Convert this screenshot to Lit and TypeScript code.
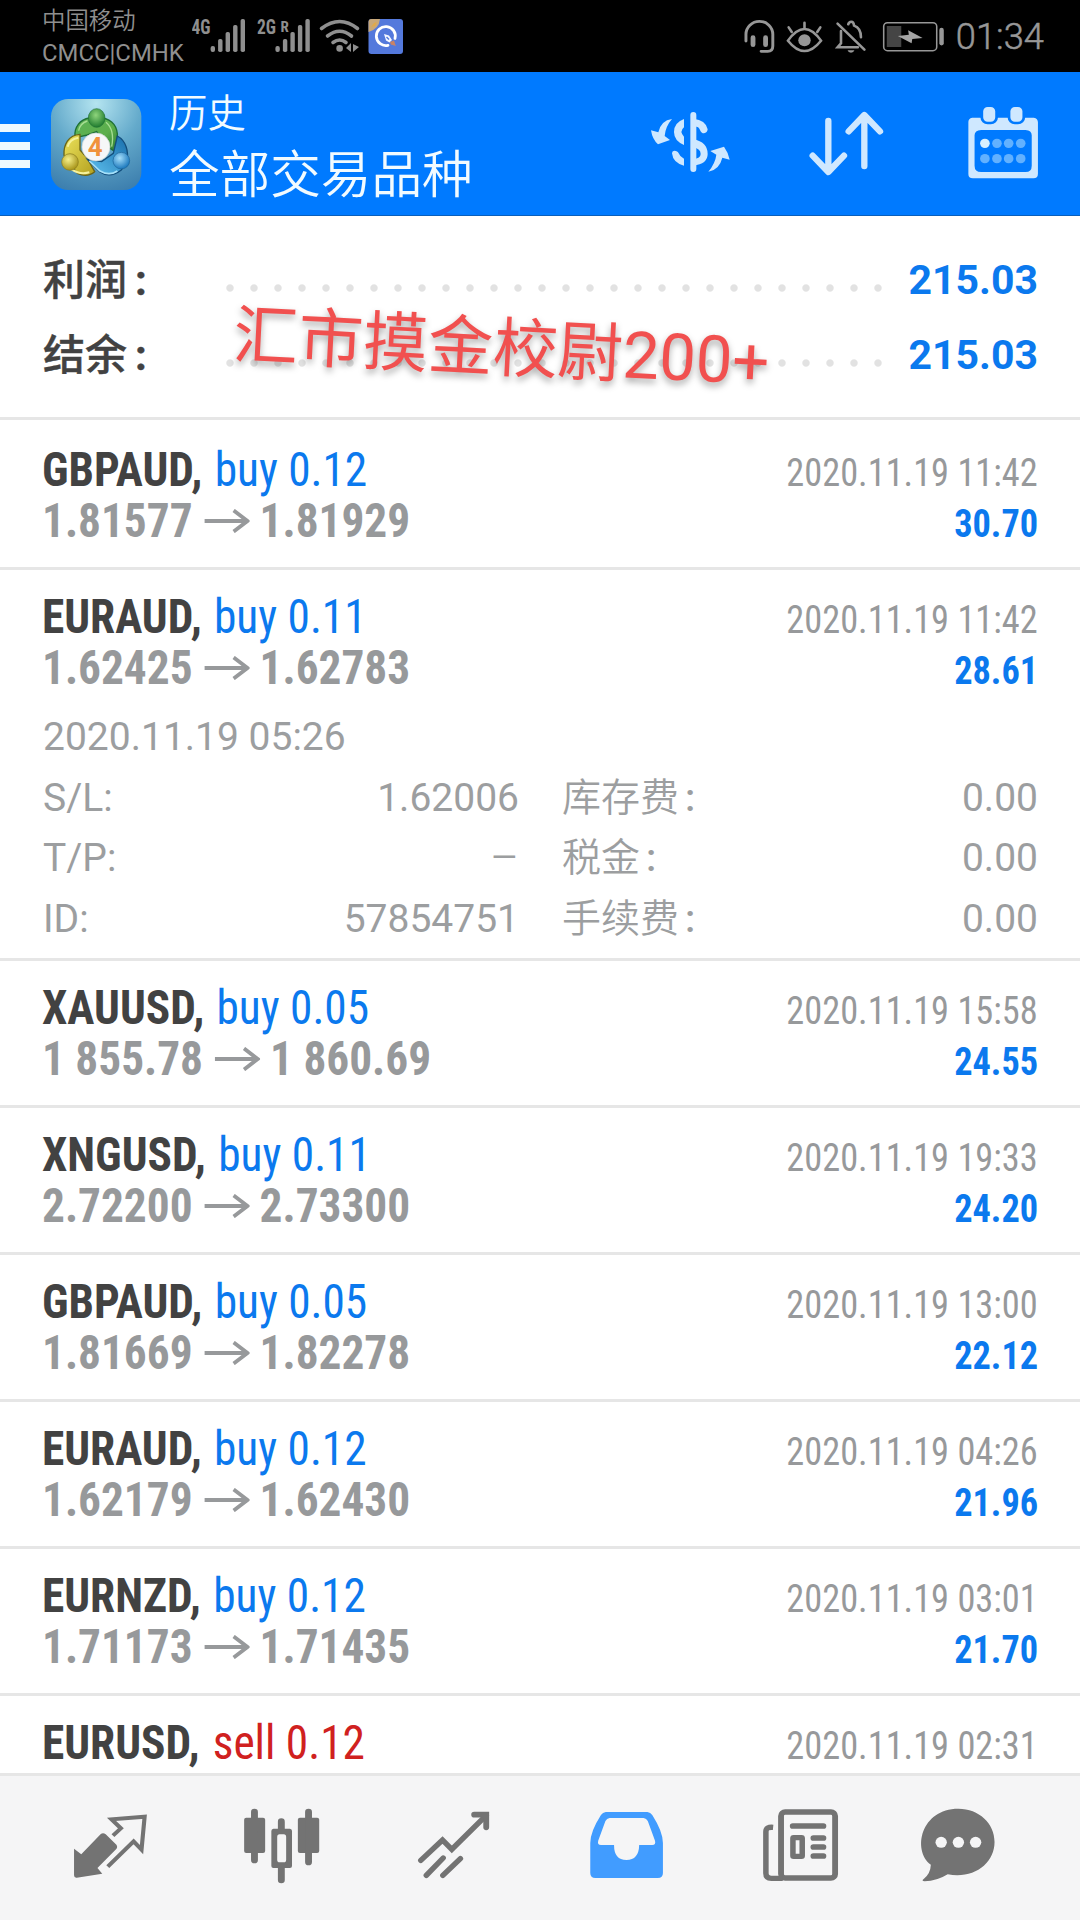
import { LitElement, html, svg, css, TemplateResult } from "lit";
import { customElement, property } from "lit/decorators.js";

interface Deal {
  symbol: string;
  side: "buy" | "sell";
  volume: string;
  open?: string;
  close?: string;
  time: string;
  profit?: string;
  details?: { openTime: string; rows: string[][] };
}

const DEALS: Deal[] = [
  { symbol: "GBPAUD", side: "buy", volume: "0.12", open: "1.81577", close: "1.81929", time: "2020.11.19 11:42", profit: "30.70" },
  {
    symbol: "EURAUD", side: "buy", volume: "0.11", open: "1.62425", close: "1.62783", time: "2020.11.19 11:42", profit: "28.61",
    details: {
      openTime: "2020.11.19 05:26",
      rows: [
        ["S/L:", "1.62006", "库存费", "0.00"],
        ["T/P:", "—", "税金", "0.00"],
        ["ID:", "57854751", "手续费", "0.00"],
      ],
    },
  },
  { symbol: "XAUUSD", side: "buy", volume: "0.05", open: "1 855.78", close: "1 860.69", time: "2020.11.19 15:58", profit: "24.55" },
  { symbol: "XNGUSD", side: "buy", volume: "0.11", open: "2.72200", close: "2.73300", time: "2020.11.19 19:33", profit: "24.20" },
  { symbol: "GBPAUD", side: "buy", volume: "0.05", open: "1.81669", close: "1.82278", time: "2020.11.19 13:00", profit: "22.12" },
  { symbol: "EURAUD", side: "buy", volume: "0.12", open: "1.62179", close: "1.62430", time: "2020.11.19 04:26", profit: "21.96" },
  { symbol: "EURNZD", side: "buy", volume: "0.12", open: "1.71173", close: "1.71435", time: "2020.11.19 03:01", profit: "21.70" },
  { symbol: "EURUSD", side: "sell", volume: "0.12", time: "2020.11.19 02:31" },
];

const icon = (x: number, y: number, w: number, h: number, body: TemplateResult) =>
  html`<svg width=${w} height=${h} viewBox="${x} ${y} ${w} ${h}">${body}</svg>`;

@customElement("status-bar")
class StatusBar extends LitElement {
  static styles = css`
    :host { display: flex; height: 72px; background: #000; color: #8f8f8f; font-family: Roboto, "Noto Sans CJK SC", sans-serif; }
    svg { display: block; flex: none; }
    .carrier { width: 150px; padding: 8px 0 0 42px; font-size: 23.4px; white-space: nowrap; }
    .carrier .cn { height: 29px; line-height: 27px; font-weight: 350; }
    .carrier .en { font-size: 23.9px; font-weight: 400; height: 30px; line-height: 32px; }
    .net { font-family: "Roboto Condensed", Roboto, sans-serif; font-weight: 700; fill: #8f8f8f; }
    .clock { margin-left: 12px; font-size: 36.3px; line-height: 74px; color: #979797; font-weight: 300; -webkit-text-stroke: 0.5px #979797; }
    .gap { flex: 1; }
    .right { display: flex; padding-right: 36px; }
  `;
  bars(x: number) {
    return svg`<g fill="#8f8f8f">
      <rect x=${x} y="46" width="4.4" height="6" rx="2"/><rect x=${x + 7.5} y="39" width="4.4" height="13" rx="1.8"/>
      <rect x=${x + 15} y="32" width="4.4" height="20" rx="1.8"/><rect x=${x + 22.5} y="25" width="4.4" height="27" rx="1.8"/>
      <rect x=${x + 30} y="19" width="4.4" height="33" rx="1.8"/></g>`;
  }
  render() {
    return html`
      <div class="carrier"><div class="cn">中国移动</div><div class="en">CMCC|CMHK</div></div>
      ${icon(192, 0, 60, 72, svg`<text class="net" x="191.5" y="34" font-size="20" textLength="19" lengthAdjust="spacingAndGlyphs">4G</text>${this.bars(210.6)}`)}
      ${icon(252, 0, 64, 72, svg`<text class="net" x="257" y="34" font-size="20" textLength="19" lengthAdjust="spacingAndGlyphs">2G</text>
        <text class="net" x="280.5" y="31.5" font-size="15">R</text>${this.bars(275.4)}`)}
      ${icon(316, 0, 46, 72, svg`<g fill="none" stroke="#8f8f8f" stroke-width="3.6" stroke-linecap="round">
        <path d="M321.5 28.5Q339.7 14.5 357.5 28.5M327.5 36Q339.7 26.5 351.5 36M333 42.5Q339.7 37.5 346 42.5"/></g>
        <circle cx="339.6" cy="48.4" r="3.3" fill="#8f8f8f"/>
        <path d="M351 43v9l-5-4zM353 44l6 3-6 5z" fill="#8f8f8f"/>`)}
      ${icon(362, 0, 46, 72, svg`<rect x="368.5" y="19" width="34.5" height="35" rx="3" fill="#5479dc"/>
        <path d="M368.5 32V22a3 3 0 0 1 3-3H380Q379 29 368.5 32z" fill="#c9a878"/><path d="M371 27l3-4 3-1-2 4z" fill="#e2a947"/>
        <path d="M388 45.300A9.500 9.500 0 1 1 395 38.500" fill="none" stroke="#fff" stroke-width="2.800" stroke-linecap="round"/>
        <path d="M384 34l5 1.500 3 4.500-2.500 2.500-3.500-2z" fill="#f6f8ff"/><path d="M386.500 37l2.500 2.500" stroke="#5479dc" stroke-width="1.400"/>
        <path d="M390 42l4-1.500 1.800 5.500-5-1.600z" fill="#c98365"/>`)}
      <div class="gap"></div>
      <div class="right">
        ${icon(742, 0, 203, 72, svg`<g transform="translate(540 0) scale(.34435 .33333)" stroke="#979797" fill="none" stroke-width="8.5" stroke-linecap="round">
          <path d="M601 123V103A39 39 0 0 1 679 103V138Q679 154 664 154H645"/>
          <path d="M621.5 113v21M658 113v21" stroke-width="14"/>
          <path d="M723 122Q771 52 819 122Q771 184 723 122zM771 68v17M725 82l9 14M817 82l-9 14" stroke-width="7.5"/>
          <circle cx="771" cy="121" r="18" fill="#979797" stroke="none"/>
          <path d="M867 71L945 149M877 93V130L867 142H926M898 73Q900 65 907 65Q914 65 915 77Q935 84 935 112" stroke-width="7.5"/>
          <path d="M896 151h20q-2 7-10 7t-10-7z" fill="#979797" stroke="none"/>
          <rect x="1001" y="68" width="154" height="84" rx="11" stroke-width="4.5"/>
          <rect x="1010" y="78" width="42" height="63" fill="#454545" stroke="none"/>
          <path d="M1169 90v40" stroke-width="13"/>
          <path d="M1042 108L1074 104 1072 91 1114 114 1084 117 1082 130z" fill="#a5a5a5" stroke="none"/>
        </g>`)}
        <div class="clock">01:34</div>
      </div>`;
  }
}

@customElement("app-header")
class AppHeader extends LitElement {
  static styles = css`
    :host { display: flex; height: 144px; box-sizing: border-box; background: #007aff; border-bottom: 1px solid #0a5fbb; color: #f2fbff; font-family: Roboto, "Noto Sans CJK SC", sans-serif; }
    svg { display: block; flex: none; }
    .titles { flex: 1; padding: 18px 0 0 19px; white-space: nowrap; }
    .sub { font-size: 38.4px; line-height: 48px; font-weight: 350; }
    .main { margin-top: 4px; font-size: 50.6px; line-height: 68px; font-weight: 350; }
    .four { font: 700 78px Roboto, sans-serif; fill: #f0923c; }
  `;
  render() {
    return html`
      ${icon(0, 72, 150, 143, svg`
        <defs>
          <radialGradient id="bg" cx=".5" cy=".05" r="1"><stop offset="0" stop-color="#b4e4f0"/><stop offset=".5" stop-color="#64aacb"/><stop offset="1" stop-color="#3d7fae"/></radialGradient>
          <linearGradient id="gr" x1="0" y1="0" x2="1" y2="1"><stop offset="0" stop-color="#5cb457"/><stop offset=".6" stop-color="#5cae4c"/><stop offset="1" stop-color="#2c7a34"/></linearGradient>
          <linearGradient id="ye" x1="0" y1="0" x2="1" y2="1"><stop offset="0" stop-color="#ece35c"/><stop offset="1" stop-color="#b3a01f"/></linearGradient>
          <linearGradient id="bl" x1="0" y1="1" x2="1" y2="0"><stop offset="0" stop-color="#61c3f0"/><stop offset="1" stop-color="#176dab"/></linearGradient>
          <radialGradient id="gb" cx=".45" cy=".35" r=".65"><stop offset="0" stop-color="#8fd57c"/><stop offset="1" stop-color="#1f7b2e"/></radialGradient>
          <radialGradient id="yb" cx=".4" cy=".35" r=".65"><stop offset="0" stop-color="#f6f08a"/><stop offset="1" stop-color="#a8951a"/></radialGradient>
          <radialGradient id="bb" cx=".4" cy=".35" r=".65"><stop offset="0" stop-color="#a5defa"/><stop offset="1" stop-color="#1b78bd"/></radialGradient>
        </defs>
        <g transform="translate(0 90) scale(.33333)">
          <path d="M0 102H90V126H0zM0 156H90V180H0zM0 210H90V234H0z" fill="#eef9ff"/>
          <rect x="153" y="27" width="271" height="273" rx="52" fill="url(#bg)"/>
          <path d="M225 140C222 112 240 88 268 84H306C338 88 354 112 352 142L345 185L315 165L290 125L262 135L240 140z" fill="url(#gr)" stroke="#1f6f35" stroke-width="4"/>
          <path d="M240 133C205 135 190 165 192 196L232 250Q262 264 284 245L262 205L240 180z" fill="url(#ye)" stroke="#6b6519" stroke-width="4"/>
          <path d="M352 138C378 152 387 185 380 212L364 240Q330 266 300 246L262 208L305 215L340 190z" fill="url(#bl)" stroke="#134e7c" stroke-width="4"/>
          <path d="M268 213L300 243Q328 259 352 243" fill="none" stroke="#a6e1fa" stroke-width="5"/>
          <path d="M203 170Q208 148 235 143M215 238Q240 255 268 247" fill="none" stroke="#f6f29c" stroke-width="6"/>
          <path d="M236 122Q240 100 262 93M335 170Q345 120 318 97" fill="none" stroke="#a5dd92" stroke-width="4"/>
          <ellipse cx="290" cy="84" rx="25" ry="28" fill="url(#gb)" stroke="#1f6f35" stroke-width="2"/>
          <circle cx="210" cy="216" r="25" fill="url(#yb)" stroke="#8a7c1c" stroke-width="2"/>
          <circle cx="364" cy="212" r="25" fill="url(#bb)" stroke="#1c6499" stroke-width="2"/>
          <circle cx="288" cy="171" r="42" fill="#f6f7f8" stroke="#ccd6d4" stroke-width="2"/>
          <text class="four" x="286" y="198" text-anchor="middle">4</text>
        </g>`)}
      <div class="titles"><div class="sub">历史</div><div class="main">全部交易品种</div></div>
      ${icon(640, 72, 440, 143, svg`
        <g transform="translate(640 90) scale(.33333)" fill="#cfe8ff">
          <path d="M160 75V237" stroke="#cfe8ff" stroke-width="18" stroke-linecap="round"/>
          <path d="M132 87V112Q117 124 132 140V165Q102 152 102 126Q102 98 132 87z"/>
          <path d="M96 190Q96 183 103 182Q113 182 116 190Q120 201 132 206V227Q99 219 96 190z"/>
          <path d="M160 86Q198 90 203 118Q202 129 192 130Q184 130 180 120Q176 108 160 110zM160 148Q203 156 203 192Q203 222 160 227V207Q182 205 182 192Q182 177 160 172z"/>
          <path d="M96 87Q63 91 55 127L33 121Q37 148 54 163L90 150L74 138Q76 110 96 87z"/>
          <path d="M205 245Q238 240 247 203L269 209Q264 186 252 170L211 183L229 194Q226 220 205 245z"/>
          <path d="M565 93V244M518 197L565 246 612 197M673 228V76M626 124L673 75 720 124" fill="none" stroke="#cfe8ff" stroke-width="19" stroke-linecap="round" stroke-linejoin="round"/>
        </g>
        <g transform="translate(540 0) scale(.34435 .33333)">
          <path fill-rule="evenodd" fill="#cfe8ff" d="M1255 353H1434Q1446 355 1446 367V521Q1446 535 1433 535H1257Q1244 535 1244 522V366Q1244 355 1255 353zM1281 390Q1262 391 1262 406V497Q1262 516 1281 516H1410Q1428 516 1428 497V406Q1428 391 1410 390z"/>
          <g fill="#cfe8ff" stroke="#007aff" stroke-width="8"><rect x="1283" y="317" width="43" height="52" rx="17"/><rect x="1362" y="317" width="43" height="52" rx="17"/></g>
          <circle cx="1292" cy="430" r="14" fill="#d6efff"/>
          <g fill="#62b1ff"><circle cx="1327" cy="430" r="14"/><circle cx="1361" cy="430" r="14"/><circle cx="1396" cy="430" r="14"/>
          <circle cx="1292" cy="476" r="14"/><circle cx="1327" cy="476" r="14"/><circle cx="1361" cy="476" r="14"/><circle cx="1396" cy="476" r="14"/></g>
        </g>`)}`;
  }
}

@customElement("account-summary")
class AccountSummary extends LitElement {
  static styles = css`
    :host { display: block; position: relative; box-sizing: border-box; height: 204px; padding: 27px 42px 0 43px; border-bottom: 3px solid #e6e6e6; font-family: Roboto, "Noto Sans CJK SC", sans-serif; }
    .line { display: flex; height: 75px; line-height: 75px; font-size: 42px; font-weight: 700; white-space: nowrap; }
    .label { width: 175.4px; color: #424242; font-weight: 500; -webkit-text-stroke: 0.4px #424242; }
    .colon { margin-left: 8px; font-weight: 700; }
    .dots { width: 672px; height: 8px; margin-top: 40.5px; background: radial-gradient(circle at 12px 4px, #e2e2e2 3.2px, transparent 4.2px) 0 0 / 24px 8px repeat-x; }
    .value { flex: 1; text-align: right; color: #0b79ee; font-size: 41px; line-height: 74px; }
    .mark { position: absolute; left: 233px; top: 85px; font-size: 65px; line-height: 96px; color: #f1504f; white-space: nowrap; transform: rotate(2.9deg); text-shadow: 0 4px 7px rgba(0, 0, 0, 0.35); }
  `;
  render() {
    return html`
      ${[["利润", "215.03"], ["结余", "215.03"]].map(([label, value]) => html`
        <div class="line"><div class="label">${label}<span class="colon">:</span></div><div class="dots"></div><div class="value">${value}</div></div>`)}
      <div class="mark">汇市摸金校尉200+</div>`;
  }
}

@customElement("deal-row")
class DealRow extends LitElement {
  @property({ attribute: false }) deal!: Deal;
  static styles = css`
    :host { display: block; box-sizing: border-box; height: 147px; padding: 21px 42px 0 41.5px; border-bottom: 3px solid #e6e6e6; font-family: "Roboto Condensed", Roboto, "Noto Sans CJK SC", sans-serif; }
    :host(.first) { height: 150px; padding-top: 24px; }
    :host(.open) { height: 391px; }
    .line { display: flex; justify-content: space-between; align-items: baseline; height: 51px; line-height: 51px; white-space: nowrap; }
    .left { font-size: 48px; transform: scaleX(0.944); transform-origin: 0 0; }
    .right { font-size: 39px; line-height: 40px; transform: scaleX(0.932); transform-origin: 100% 0; }
    .symbol { font-weight: 700; color: #424242; }
    .buy, .sell { margin-left: 2px; }
    .buy { color: #0b79ee; }
    .sell { color: #d0211f; margin-left: 3px; }
    .price { font-weight: 700; color: #97999b; }
    .time { color: #97999b; }
    .profit { font-weight: 700; color: #0b79ee; }
    .arrow { margin: 0 11px 0 12px; vertical-align: 4px; }
    .details { margin: 14px 0 0 1.5px; font: 400 39px/60.6px Roboto, "Noto Sans CJK SC", sans-serif; color: #9c9ea0; }
    .grid { display: grid; grid-template-columns: 200px 276px 276px 1fr; white-space: nowrap; }
    .grid :nth-child(even) { text-align: right; }
    .grid :nth-child(4n + 3) { padding-left: 43px; font-weight: 350; }
    .grid .dash { font-size: 33px; padding-right: 2px; }
    .colon { margin-left: 6px; font-weight: 500; }
  `;
  render() {
    const d = this.deal;
    return html`
      <div class="line">
        <div class="left"><span class="symbol">${d.symbol},</span> <span class=${d.side}>${d.side} ${d.volume}</span></div>
        <div class="right time">${d.time}</div>
      </div>
      ${d.open ? html`<div class="line">
        <div class="left price">${d.open}<svg class="arrow" width="48" height="24" viewBox="0 0 48 24"><path d="M0 12H45M31 1.5L45.5 12L31 22.5" fill="none" stroke="#97999b" stroke-width="4"/></svg>${d.close}</div>
        <div class="right profit">${d.profit}</div>
      </div>` : null}
      ${d.details ? html`<div class="details">
        <div>${d.details.openTime}</div>
        <div class="grid">${d.details.rows.map(([a, b, c, e]) => html`
          <div>${a}</div><div class=${b === "—" ? "dash" : ""}>${b}</div><div>${c}<span class="colon">:</span></div><div>${e}</div>`)}</div>
      </div>` : null}`;
  }
}

@customElement("tab-bar")
class TabBar extends LitElement {
  static styles = css`
    :host { display: flex; box-sizing: border-box; height: 147px; padding-left: 24px; background: #f5f5f6; border-top: 3px solid #e6e6e6; }
    svg { display: block; flex: none; }
  `;
  render() {
    const left = "translate(0 1740) scale(.34435 .33333)";
    const right = "translate(540 1740) scale(.34435 .33333)";
    const g = "#737373";
    return html`
      ${icon(24, 1776, 172, 144, svg`<g transform=${left}>
        <path d="M215 326L236 343L292 283Q299 276 307 283L338 314Q343 321 337 328L283 384L297 401L223 413Q215 414 215 406z" fill=${g}/>
        <path d="M328 287L351 265L324 238L420 230L411 329L388 304L313 380" fill="none" stroke=${g} stroke-width="12"/></g>`)}
      ${icon(196, 1776, 172, 144, svg`<g transform=${left} fill=${g}>
        <rect x="709" y="233" width="61" height="106" rx="6"/><rect x="865" y="233" width="62" height="106" rx="6"/>
        <path d="M739 216V360M896 216V366M817 245V270M817 380V420" stroke=${g} stroke-width="20" stroke-linecap="round"/>
        <path fill-rule="evenodd" d="M794 266H842Q848 267 848 273V378Q848 384 842 384H794Q788 384 788 378V273Q788 267 794 266zM812 283Q805 283 805 291V359Q805 367 812 367H824Q831 367 831 359V291Q831 283 824 283z"/></g>`)}
      ${icon(368, 1776, 172, 144, svg`<g transform=${left} fill="none" stroke=${g} stroke-width="16" stroke-linecap="round">
        <path d="M1222 361L1285 300L1312 328L1412 226M1238 406L1287 354M1286 406L1337 356"/>
        <path d="M1377 224H1412V262" stroke-width="17" stroke-linejoin="miter"/></g>`)}
      ${icon(540, 1776, 172, 144, svg`<g transform=${right}>
        <path fill-rule="evenodd" fill="#419cff" d="M191 216H312Q321 217 326 225Q357 275 357 309V399Q357 414 342 414H161Q146 414 146 399V309Q146 275 177 225Q182 217 191 216zM202 234Q194 235 190 243L169 302Q166 315 177 315H215Q215 360 251 360Q287 360 288 315H326Q337 315 334 302L313 243Q309 235 301 234z"/></g>`)}
      ${icon(712, 1776, 172, 144, svg`<g transform=${right} fill="none" stroke=${g}>
        <rect x="700" y="216" width="157" height="198" rx="12" stroke-width="17"/>
        <path d="M677 262Q656 260 656 275V400Q656 415 672 415H705" stroke-width="16"/>
        <path d="M734 258H823M794 294H823M794 321H823M794 348H823" stroke-width="17" stroke-linecap="round"/>
        <rect x="734.5" y="293" width="27" height="56" rx="2" stroke-width="16"/></g>`)}
      ${icon(884, 1776, 172, 144, svg`<g transform=${right}>
        <path d="M1215 206C1275 206 1320 250 1320 306C1320 370 1260 418 1184 403Q1153 423 1117 424Q1106 423 1115 416Q1134 400 1135 374C1080 330 1106 206 1215 206z" fill=${g}/>
        <g fill="#f5f5f6"><circle cx="1165" cy="307" r="16.5"/><circle cx="1215" cy="307" r="16.5"/><circle cx="1265" cy="307" r="16.5"/></g></g>`)}`;
  }
}

@customElement("app-root")
class AppRoot extends LitElement {
  static styles = css`
    :host { display: flex; flex-direction: column; width: 1080px; height: 1920px; background: #fff; overflow: hidden; }
    .list { flex: 1; min-height: 0; overflow: hidden; }
    status-bar, app-header, account-summary, tab-bar { flex: none; }
  `;
  render() {
    return html`
      <status-bar></status-bar>
      <app-header></app-header>
      <account-summary></account-summary>
      <div class="list">
        ${DEALS.map((d, i) => html`<deal-row class=${i === 0 ? "first" : d.details ? "open" : ""} .deal=${d}></deal-row>`)}
      </div>
      <tab-bar></tab-bar>`;
  }
}
